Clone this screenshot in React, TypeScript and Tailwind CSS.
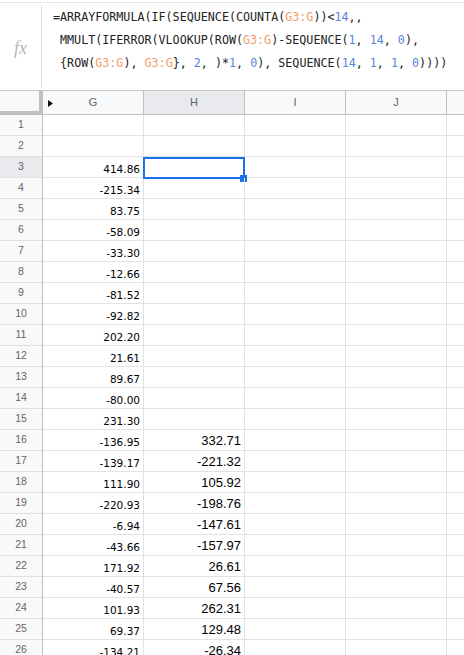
import React from "react";

const G: Record<number, string> = {
  3: "414.86", 4: "-215.34", 5: "83.75", 6: "-58.09", 7: "-33.30", 8: "-12.66",
  9: "-81.52", 10: "-92.82", 11: "202.20", 12: "21.61", 13: "89.67", 14: "-80.00",
  15: "231.30", 16: "-136.95", 17: "-139.17", 18: "111.90", 19: "-220.93", 20: "-6.94",
  21: "-43.66", 22: "171.92", 23: "-40.57", 24: "101.93", 25: "69.37", 26: "-134.21",
};
const H: Record<number, string> = {
  16: "332.71", 17: "-221.32", 18: "105.92", 19: "-198.76", 20: "-147.61", 21: "-157.97",
  22: "26.61", 23: "67.56", 24: "262.31", 25: "129.48", 26: "-26.34",
};

const R = ({ children }: { children: React.ReactNode }) => (
  <span className="text-[#f29b68]">{children}</span>
);
const N = ({ children }: { children: React.ReactNode }) => (
  <span className="text-[#5b84dc]">{children}</span>
);

export default function App() {
  const rows = Array.from({ length: 26 }, (_, i) => i + 1);
  return (
    <div className="w-[464px] h-[655px] overflow-hidden bg-white pt-[2px]" style={{ fontFamily: "'Liberation Sans', Arial, sans-serif" }}>
      {/* formula bar */}
      <div className="h-[89px] border-t border-b border-t-[#e6e6e6] border-b-[#c8c8c8] flex">
        <div className="w-[41px] flex items-center justify-center">
          <span className="text-[#b8b8b8] italic text-[18px] leading-none mt-[2px]" style={{ fontFamily: "'Liberation Serif', serif" }}>fx</span>
        </div>
        <div className="w-px bg-[#dadada] mt-[2px] mb-[2px]" />
        <div
          className="pl-[11px] pt-[3px] text-[11.7px] leading-[23px] text-[#222] whitespace-pre"
          style={{ fontFamily: "'DejaVu Sans Mono', monospace" }}
        >
          <div>=ARRAYFORMULA(IF(SEQUENCE(COUNTA(<R>G3:G</R>))&lt;<N>14</N>,,</div>
          <div> MMULT(IFERROR(VLOOKUP(ROW(<R>G3:G</R>)-SEQUENCE(<N>1</N>, <N>14</N>, <N>0</N>),</div>
          <div> {"{"}ROW(<R>G3:G</R>), <R>G3:G</R>{"}"}, <N>2</N>, )*<N>1</N>, <N>0</N>), SEQUENCE(<N>14</N>, <N>1</N>, <N>1</N>, <N>0</N>))))</div>
        </div>
      </div>

      {/* sheet */}
      <div className="grid grid-cols-[43px_101px_101px_101px_101px_1fr]">
        {/* header row */}
        <div className="h-[24px] bg-[#f8f9fa] border-r-4 border-b-4 border-[#c0c0c0]" />
        <div className="relative h-[24px] bg-[#f8f9fa] border-r border-b border-[#c0c0c0] flex items-center justify-center text-[11px] text-[#5f6368]">
          <svg className="absolute left-[5px] top-[9px]" width="5" height="7" viewBox="0 0 5 7">
            <path d="M0 0 L5 3.5 L0 7 Z" fill="#111" />
          </svg>
          G
        </div>
        <div className="h-[24px] bg-[#e8eaed] border-r border-b border-[#c0c0c0] flex items-center justify-center text-[11px] text-[#5f6368]">H</div>
        <div className="h-[24px] bg-[#f8f9fa] border-r border-b border-[#c0c0c0] flex items-center justify-center text-[11px] text-[#5f6368]">I</div>
        <div className="h-[24px] bg-[#f8f9fa] border-r border-b border-[#c0c0c0] flex items-center justify-center text-[11px] text-[#5f6368]">J</div>
        <div className="h-[24px] bg-[#f8f9fa] border-b border-[#c0c0c0]" />

        {rows.map((r) => (
          <React.Fragment key={r}>
            <div
              className={`h-[21px] border-r border-r-[#c0c0c0] border-b border-b-[#e0e0e0] flex items-center justify-center text-[10.5px] text-[#666] ${r === 3 ? "bg-[#e8eaed]" : "bg-[#f8f9fa]"}`}
            >
              {r}
            </div>
            <div
              className="h-[21px] border-r border-b border-[#e2e2e2] flex items-end justify-end pr-[3px] pb-[3px] text-[10.5px] leading-none text-black"
              style={{ fontFamily: "'DejaVu Sans', sans-serif" }}
            >
              {G[r] ?? ""}
            </div>
            <div className="relative h-[21px] border-r border-b border-[#e2e2e2] flex items-end justify-end pr-[3px] pb-[3px] text-[13px] leading-none text-black">
              {H[r] ?? ""}
              {r === 3 && (
                <>
                  <div className="absolute left-[-1px] top-0 w-[102px] h-[22px] border-2 border-[#1a73e8]" />
                  <div className="absolute left-[96px] top-[18px] w-[7px] h-[7px] bg-[#1a73e8]" />
                </>
              )}
            </div>
            <div className="h-[21px] border-r border-b border-[#e2e2e2]" />
            <div className="h-[21px] border-r border-b border-[#e2e2e2]" />
            <div className="h-[21px] border-b border-[#e2e2e2]" />
          </React.Fragment>
        ))}
      </div>
    </div>
  );
}
